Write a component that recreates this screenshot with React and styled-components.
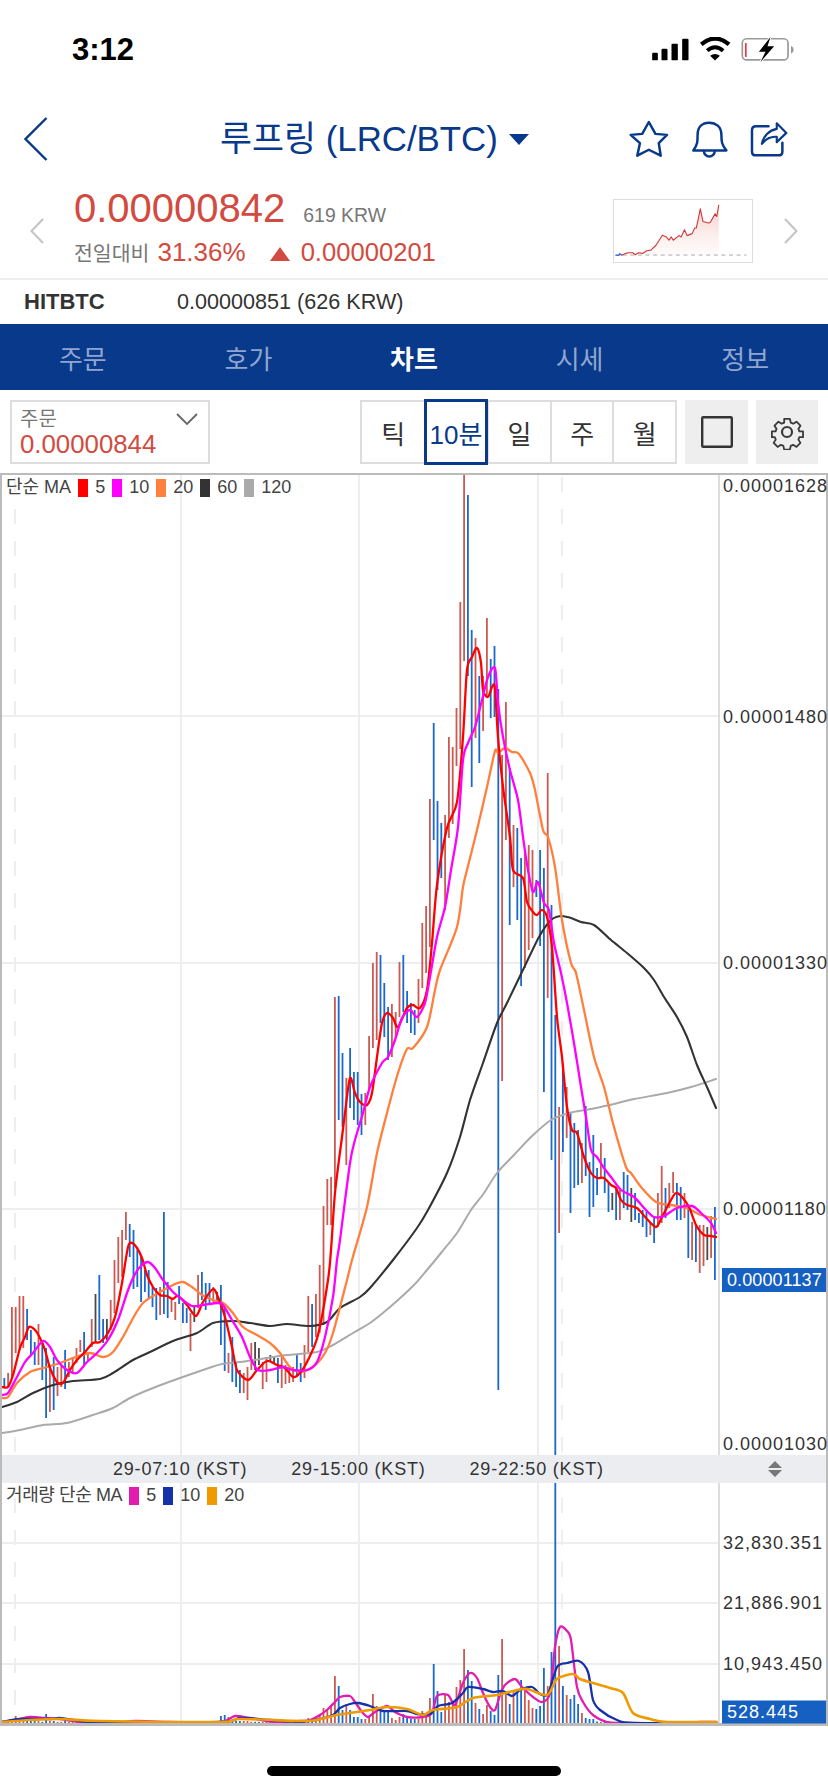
import React from 'react';
import styled, { createGlobalStyle } from 'styled-components';

const NAVY = '#08398a';
const RED = '#d24b40';
const FONT = '"Liberation Sans", "Noto Sans CJK KR", sans-serif';

const Global = createGlobalStyle`
  html, body { margin: 0; padding: 0; background: #fff; }
  body { font-family: ${FONT}; color: #333; }
  #root { width: 828px; }
`;

const Page = styled.div`
  width: 828px;
  height: 1792px;
  display: flex;
  flex-direction: column;
  overflow: hidden;
`;

/* status bar */
const StatusBar = styled.div`
  height: 98px;
  flex: none;
  padding: 0 34px 0 72px;
  box-sizing: border-box;
  display: flex;
  align-items: center;
  justify-content: space-between;
`;
const Clock = styled.span`
  padding-top: 2px;
  font-size: 31px;
  font-weight: 700;
  color: #000;
`;
const StatusIcons = styled.div`
  display: flex;
  align-items: center;
  gap: 10px;
`;

/* header */
const Header = styled.div`
  height: 82px;
  flex: none;
  box-sizing: border-box;
  padding: 0 40px 0 24px;
  display: flex;
  align-items: center;
`;
const Title = styled.div`
  margin-left: 172px;
  display: flex;
  align-items: center;
  gap: 11px;
  font-size: 34.8px;
  line-height: 44px;
  color: ${NAVY};
  white-space: nowrap;
`;
const Caret = styled.span`
  width: 0;
  height: 0;
  border-left: 10px solid transparent;
  border-right: 10px solid transparent;
  border-top: 11px solid ${NAVY};
`;
const HeaderIcons = styled.div`
  margin-left: auto;
  display: flex;
  align-items: center;
  gap: 22px;
`;

/* price */
const PriceSection = styled.div`
  height: 100px;
  flex: none;
  box-sizing: border-box;
  padding: 3px 30px 0 30px;
  display: flex;
  align-items: center;
  border-bottom: 2px solid #eee;
`;
const PriceCol = styled.div`
  align-self: flex-start;
  margin: 5px 0 0 30px;
  display: flex;
  flex-direction: column;
  gap: 9px;
`;
const PriceRow = styled.div`
  display: flex;
  align-items: baseline;
  white-space: nowrap;
`;
const BigPrice = styled.span`
  font-size: 40px;
  line-height: 40px;
  color: ${RED};
`;
const Krw = styled.span`
  margin-left: 18px;
  font-size: 19.4px;
  color: #777;
`;
const Muted = styled.span`
  font-size: 20.5px;
  line-height: 30px;
  color: #777;
`;
const RedText = styled.span`
  font-size: ${p => p.$size}px;
  line-height: 30px;
  color: ${RED};
  margin-left: ${p => p.$gap || 0}px;
`;
const Up = styled.span`
  width: 0;
  height: 0;
  margin-left: 24px;
  border-left: 10px solid transparent;
  border-right: 10px solid transparent;
  border-bottom: 14px solid ${RED};
`;
const Spark = styled.div`
  margin-left: auto;
  margin-right: 31px;
  width: 140px;
  height: 64px;
  box-sizing: border-box;
  border: 1.5px solid #ddd;
  svg { display: block; width: 137px; height: 61px; }
`;

/* exchange row */
const ExchangeRow = styled.div`
  height: 44px;
  flex: none;
  box-sizing: border-box;
  padding-left: 24px;
  display: flex;
  align-items: center;
  font-size: 21.6px;
  color: #333;
`;
const ExName = styled.b`
  width: 153px;
  font-size: 22px;
  color: #333;
`;

/* nav */
const Nav = styled.div`
  height: 66px;
  flex: none;
  background: ${NAVY};
  display: grid;
  grid-template-columns: repeat(5, 1fr);
`;
const NavItem = styled.div`
  display: flex;
  align-items: center;
  justify-content: center;
  font-size: 26px;
  color: ${p => (p.$active ? '#fff' : '#8ea6cf')};
  font-weight: ${p => (p.$active ? 700 : 400)};
`;

/* toolbar */
const Toolbar = styled.div`
  height: 83px;
  flex: none;
  box-sizing: border-box;
  padding: 10px 10px 9px;
  display: flex;
  align-items: stretch;
  gap: 8px;
`;
const OrderBox = styled.div`
  width: 200px;
  box-sizing: border-box;
  border: 2px solid #ddd;
  padding: 5px 0 0 8px;
  display: flex;
  flex-direction: column;
  position: relative;
`;
const OrderLabel = styled.span`
  font-size: 20px;
  line-height: 24px;
  color: #777;
`;
const OrderValue = styled.span`
  font-size: 25.8px;
  line-height: 27px;
  color: ${RED};
`;
const OrderChevron = styled.svg`
  position: absolute;
  right: 10px;
  top: 11px;
`;
const Tabs = styled.div`
  margin-left: auto;
  width: 317px;
  box-sizing: border-box;
  border: 2px solid #ddd;
  display: grid;
  grid-template-columns: repeat(5, 1fr);
`;
const Tab = styled.div`
  display: flex;
  align-items: center;
  justify-content: center;
  font-size: 26px;
  white-space: nowrap;
  color: ${p => (p.$active ? NAVY : '#333')};
  border-left: ${p => (p.$first ? 'none' : '2px solid #ddd')};
  ${p => p.$active && `outline: 3px solid ${NAVY}; outline-offset: -2px; position: relative; border-left: none; margin: -2px 0;`}
`;
const IconButton = styled.div`
  width: ${p => p.$w}px;
  background: #eee;
  display: flex;
  align-items: center;
  justify-content: center;
`;

/* chart */
const ChartFrame = styled.div`
  width: 828px;
  height: 1253px;
  flex: none;
  box-sizing: border-box;
  border: solid #bbb;
  border-width: 2px 2px 3px;
  display: flex;
  flex-direction: column;
`;
const Pane = styled.div`
  display: flex;
  height: ${p => p.$h}px;
  flex: none;
`;
const Plot = styled.div`
  position: relative;
  width: 716px;
  flex: none;
  svg { display: block; }
`;
const Legend = styled.div`
  position: absolute;
  left: 4px;
  top: ${p => p.$top}px;
  display: flex;
  align-items: center;
  gap: 7px;
  font-size: 18px;
  line-height: 19px;
  color: #444;
  white-space: nowrap;
`;
const LegendTitle = styled.span`
  letter-spacing: ${p => p.$ls || 0}px;
`;
const Swatch = styled.i`
  display: block;
  width: 10px;
  height: 18px;
  background: ${p => p.$c};
`;
const LegendItem = styled.span`
  display: flex;
  align-items: center;
  gap: 7px;
`;
const Axis = styled.div`
  position: relative;
  flex: 1;
  border-left: 2px solid #ddd;
`;
const Tick = styled.span`
  position: absolute;
  left: 3px;
  transform: translateY(-50%);
  font-size: 18px;
  line-height: 22px;
  letter-spacing: 1px;
  color: #333;
  white-space: nowrap;
`;
const CurrentTick = styled(Tick)`
  left: 2px;
  right: 0;
  box-sizing: border-box;
  height: ${p => p.$h}px;
  line-height: ${p => p.$h}px;
  padding-left: 5px;
  letter-spacing: ${p => p.$ls}px;
  background: #1560c0;
  color: #fff;
`;
const TimeBar = styled.div`
  height: 28px;
  flex: none;
  background: #ecedf1;
  box-sizing: border-box;
  padding: 0 44px 0 111px;
  display: flex;
  align-items: center;
  gap: 44px;
  font-size: 18px;
  letter-spacing: 0.8px;
  color: #333;
  white-space: nowrap;
`;
const SortIcon = styled.svg`
  margin-left: auto;
`;
const HomeBar = styled.div`
  width: 294px;
  height: 10px;
  flex: none;
  margin: 40px auto 0;
  border-radius: 5px;
  background: #000;
`;

/* data: colour, top, bottom in page pixels */
const candles = `b1378,1388 r1373,1387 r1307,1377 r1307,1353 r1296,1350 r1296,1348 b1309,1340 b1330,1355 b1342,1365 r1324,1365
b1340,1380 b1348,1418 r1365,1412 b1357,1410 r1367,1396 r1366,1387 b1350,1389 r1362,1377 r1357,1372 r1348,1363
r1340,1352 b1332,1365 r1352,1360 r1319,1347 d1294,1343 b1275,1340 b1319,1343 d1319,1340 r1300,1330 r1260,1313
r1237,1283 r1230,1277 r1212,1240 b1224,1257 b1230,1289 b1250,1287 b1255,1302 b1270,1292 b1270,1298 b1287,1307
b1288,1320 r1287,1315 b1212,1314 b1282,1318 r1298,1312 r1302,1320 b1286,1304 b1303,1323 b1308,1323 r1313,1351
d1307,1322 r1275,1308 b1272,1300 b1283,1310 b1283,1303 r1287,1302 d1292,1302 b1285,1345 b1308,1371 r1353,1373
b1337,1382 b1363,1387 b1370,1393 r1373,1393 r1367,1400 r1343,1370 d1342,1370 d1348,1365 r1362,1389 r1357,1382
d1355,1362 d1356,1364 b1358,1383 r1357,1388 r1365,1384 r1367,1383 r1367,1382 b1355,1377 b1363,1382 r1345,1378
r1296,1352 b1304,1347 r1294,1337 r1265,1333 r1206,1325 r1179,1225 r1177,1225 r997,1188 b996,1120 b1053,1127
r1078,1165 b1048,1108 b1072,1120 b1072,1125 b1094,1135 r1093,1125 r1036,1090 r963,1048 r952,1040 b955,1023
b983,1037 b1007,1060 r1004,1057 r1012,1038 r962,1017 b955,1012 b991,1023 b1003,1033 b1010,1035 r979,1023
r923,988 r906,973 r799,947 b723,840 b801,890 b823,878 r815,910 r737,838 r747,824 r708,766
r602,749 r474,661 b495,676 b630,787 r638,738 b676,763 r676,731 r618,697 b659,718 b646,717
b689,1390 r755,1081 r702,840 b768,925 r825,887 b828,920 b858,986 r850,968 r845,950 r850,938
b880,897 b850,946 b868,1092 r773,998 b905,1160 b1015,1455 r1107,1233 b1065,1152 r1087,1138 b1113,1213
b1123,1188 b1130,1185 r1143,1183 b1106,1176 b1162,1217 b1135,1207 b1168,1195 r1143,1178 b1158,1193 b1183,1212
d1193,1210 b1187,1220 r1190,1220 b1172,1208 b1175,1210 d1188,1222 b1193,1220 b1213,1223 b1210,1227 b1210,1237
r1222,1235 b1218,1243 r1193,1227 r1166,1223 b1188,1218 r1183,1208 r1172,1193 b1183,1220 b1187,1220 r1193,1218
b1205,1258 r1222,1260 b1225,1262 r1225,1273 r1225,1266 d1227,1260 r1216,1258 b1207,1280`
  .trim().split(/\s+/).map(s => {
    const [t, b] = s.slice(1).split(',').map(Number);
    return { c: s[0], t, b };
  });

const volLate = [5,4,3,9,15,14,16,47,37,13,19,13,6,6,4,4,7,29,17,14,13,11,5,3,6,9,5,4,4,4,12,9,25,59,32,11,29,21,19,36,43,74,53,42,20,14,9,18,12,8,48,84,31,19,33,31,43,33,23,15,14,17,55,37,71,240,77,37,28,24,28,19,10,5,4,4,1.5];
const volEarly = { 2: 4, 3: 7, 4: 5, 5: 2, 6: 3, 7: 2, 8: 2, 9: 2, 11: 9, 12: 2, 13: 2, 16: 3, 30: 3, 57: 7, 58: 8, 59: 6, 60: 3, 61: 2, 62: 2, 63: 2, 64: 2 };
const volume = i => (i >= 80 ? volLate[i - 80] ?? 1 : volEarly[i] ?? 1.2);
const candleX = i => 4.3 + 3.8 * i;
const COLORS = { b: '#1b69cd', r: '#cb5a52', d: '#4a4a4a' };

const pts = s => s.trim().split(/\s+/).map(p => p.split(',').map(Number));

const ma5 = pts(`2,1387 8,1387 13,1375 20,1348 25,1337 29,1327 35,1330 40,1338 45,1350 50,1368 57,1382 63,1383 70,1370 77,1360 85,1352 93,1343 100,1342 108,1333 115,1317 122,1283 128,1247 132,1243 137,1248 142,1258 147,1275 153,1287 160,1295 167,1296 173,1299 178,1296 187,1305 196,1316 203,1302 213,1289 218,1297 225,1317 232,1347 237,1370 248,1380 257,1370 267,1361 277,1365 285,1368 293,1377 300,1373 308,1360 318,1335 328,1280 331,1250 335,1193 342,1137 345,1113 350,1078 355,1093 360,1102 367,1105 372,1093 377,1057 382,1023 387,1013 393,1018 398,1027 407,1008 413,1005 420,1008 427,990 432,943 437,885 447,828 457,802 463,737 467,670 472,657 477,648 481,663 483,690 488,697 492,687 495,688 498,737 503,787 510,837 513,870 523,878 527,902 533,912 537,915 542,910 547,917 552,947 557,1017 562,1057 567,1107 572,1130 577,1133 584,1157 591,1173 597,1178 604,1178 611,1185 616,1188 621,1200 627,1205 637,1208 646,1218 656,1227 662,1217 671,1200 676,1193 682,1197 689,1207 696,1225 704,1235 711,1236 716,1237`);
const ma10 = pts(`2,1395 8,1393 17,1377 25,1362 33,1353 43,1341 50,1347 57,1360 67,1370 77,1373 87,1362 97,1353 108,1340 118,1320 127,1293 133,1278 140,1267 148,1262 155,1268 163,1280 173,1292 183,1300 192,1306 203,1305 217,1303 223,1305 232,1320 242,1337 250,1357 258,1370 270,1370 283,1367 293,1370 307,1370 317,1362 325,1337 333,1297 337,1260 340,1240 350,1163 355,1140 363,1113 370,1087 382,1063 388,1057 395,1040 402,1018 410,1010 417,1017 425,1003 430,977 437,937 445,907 451,870 458,827 463,760 468,743 475,727 482,700 488,677 495,668 498,703 503,737 510,770 518,800 523,837 528,870 533,892 538,882 544,903 549,910 554,943 561,973 567,1003 574,1043 581,1087 586,1117 591,1150 597,1157 604,1168 611,1177 621,1190 634,1197 646,1210 654,1217 664,1216 677,1208 692,1206 701,1213 711,1223 716,1233`);
const ma20 = pts(`2,1398 8,1397 17,1383 30,1372 43,1368 60,1363 73,1358 90,1353 103,1357 113,1352 123,1337 132,1320 143,1303 160,1292 173,1285 183,1282 192,1287 202,1295 213,1300 223,1303 233,1313 243,1327 257,1335 270,1343 280,1353 290,1367 300,1372 313,1367 325,1353 333,1333 347,1280 352,1260 367,1207 377,1153 387,1113 398,1073 407,1049 413,1048 427,1027 435,990 440,970 457,927 463,887 467,870 477,830 487,787 495,751 498,753 505,748 512,752 519,754 530,773 535,790 543,830 548,837 555,867 562,920 571,963 576,973 584,1010 594,1057 604,1087 614,1127 626,1167 631,1173 641,1187 656,1202 671,1205 687,1208 701,1215 716,1219`);
const ma60 = pts(`2,1407 17,1402 33,1393 53,1385 73,1381 100,1379 113,1373 133,1360 150,1352 173,1341 197,1333 213,1323 233,1321 250,1323 270,1326 287,1324 310,1326 327,1322 340,1308 360,1297 370,1288 393,1260 417,1228 428,1210 447,1173 460,1137 470,1100 483,1063 497,1023 507,1003 522,972 539,937 551,920 561,916 571,918 581,922 594,925 611,940 627,953 644,968 654,980 664,997 677,1017 687,1037 697,1065 707,1087 716,1108`);
const ma120 = pts(`2,1433 20,1430 43,1425 67,1423 93,1415 113,1408 130,1398 153,1388 180,1378 203,1370 222,1364 240,1362 267,1358 287,1355 317,1352 333,1345 353,1333 370,1323 390,1307 414,1285 427,1270 441,1253 457,1233 471,1210 484,1193 497,1173 514,1155 531,1137 551,1120 569,1113 591,1109 614,1104 634,1099 667,1093 691,1087 716,1079`);
const vPink = pts(`2,1722 15,1720 30,1717 45,1718 60,1719 80,1722 115,1723 135,1721 170,1722 220,1722 235,1716 250,1718 275,1722 300,1721 310,1720 320,1715 328,1709 335,1702 340,1697 350,1696 355,1702 362,1712 368,1717 375,1712 387,1706 395,1712 407,1717 423,1717 432,1713 437,1696 448,1695 455,1705 463,1683 470,1673 477,1678 483,1693 490,1707 495,1710 500,1695 505,1685 515,1679 522,1687 533,1697 542,1702 550,1693 555,1647 560,1627 567,1631 571,1640 577,1687 583,1702 593,1715 607,1722 620,1723 680,1723 700,1722 716,1722`);
const vBlue = pts(`2,1722 20,1719 50,1719 60,1718 80,1721 100,1722 220,1722 240,1718 270,1720 300,1722 320,1719 333,1715 340,1708 350,1704 358,1703 370,1706 383,1711 407,1711 417,1714 430,1714 438,1706 452,1703 463,1693 468,1687 483,1689 493,1692 503,1691 512,1696 520,1690 532,1687 540,1694 548,1694 557,1667 567,1663 579,1661 588,1672 593,1700 600,1710 617,1720 633,1723 716,1723`);
const vOrange = pts(`2,1722 30,1720 60,1719 100,1721 220,1722 240,1719 300,1721 317,1720 337,1715 357,1712 370,1710 387,1707 407,1709 423,1715 433,1710 457,1707 473,1698 497,1695 513,1691 527,1689 547,1695 557,1679 573,1674 580,1679 593,1683 610,1688 623,1693 633,1713 650,1719 667,1722 717,1722`);

const smooth = p => {
  let d = `M${p[0][0]} ${p[0][1]}`;
  for (let i = 0; i < p.length - 1; i++) {
    const a = p[i - 1] || p[i], b = p[i], c = p[i + 1], e = p[i + 2] || c;
    const k = 0.14;
    d += `C${(b[0] + (c[0] - a[0]) * k).toFixed(1)} ${(b[1] + (c[1] - a[1]) * k).toFixed(1)} ${(c[0] - (e[0] - b[0]) * k).toFixed(1)} ${(c[1] - (e[1] - b[1]) * k).toFixed(1)} ${c[0]} ${c[1]}`;
  }
  return d;
};

const clamp = (v, lo, hi) => Math.min(hi, Math.max(lo, v));
const priceTop = v => clamp(1209 + (1180 - v) * 1.64, 486, 1444) - 475;
const volTop = v => clamp(1724 - v * (181 / 32830.351), 0, 1711.5) - 1483;

const GRID = '#eeeeee';

function Grid({ top, bottom, rows, dashStart }) {
  return (
    <g stroke={GRID} strokeWidth="2" fill="none">
      {rows.map(y => <line key={y} x1="2" x2="718" y1={y} y2={y} />)}
      {[181, 359, 538].map(x => <line key={x} x1={x} x2={x} y1={top} y2={bottom} />)}
      {[15, 562].map(x => <line key={x} x1={x} x2={x} y1={dashStart} y2={bottom} strokeDasharray="15 17" />)}
    </g>
  );
}

function CandlePlot() {
  return (
    <svg width="716" height="980" viewBox="2 475 716 980">
      <Grid top={475} bottom={1455} rows={[716, 963, 1209]} dashStart={477} />
      {candles.map((c, i) => (
        <rect key={i} x={candleX(i) - 0.9} y={c.t} width="1.8" height={c.b - c.t} fill={COLORS[c.c]} />
      ))}
      <g fill="none" strokeLinejoin="round" strokeLinecap="round">
        <path d={smooth(ma120)} stroke="#aaaaaa" strokeWidth="2" />
        <path d={smooth(ma60)} stroke="#333333" strokeWidth="2.1" />
        <path d={smooth(ma20)} stroke="#ff7f3c" strokeWidth="2.3" />
        <path d={smooth(ma5)} stroke="#ff0000" strokeWidth="2.3" />
        <path d={smooth(ma10)} stroke="#ff00ff" strokeWidth="2.3" />
      </g>
    </svg>
  );
}

function VolumePlot() {
  return (
    <svg width="716" height="240" viewBox="2 1483 716 240">
      <Grid top={1483} bottom={1723} rows={[1543, 1603, 1664]} dashStart={1498} />
      {candles.map((c, i) => {
        const h = volume(i);
        return <rect key={i} x={candleX(i) - 0.9} y={1723 - h} width="1.8" height={h} fill={COLORS[c.c === 'd' ? 'b' : c.c]} />;
      })}
      <g fill="none" strokeLinejoin="round" strokeLinecap="round">
        <path d={smooth(vPink)} stroke="#e31cb0" strokeWidth="2.3" />
        <path d={smooth(vBlue)} stroke="#1532a8" strokeWidth="2.3" />
        <path d={smooth(vOrange)} stroke="#ef9a00" strokeWidth="2.6" />
      </g>
    </svg>
  );
}

const navIcon = { fill: 'none', stroke: NAVY, strokeWidth: 7.5, strokeLinejoin: 'round', strokeLinecap: 'round' };

const SparkPts = pts(`18,437 28,438 30,433 38,437 48,432 58,430 70,430 78,436 88,430 100,432 112,424 125,422 140,408 160,377 172,382 180,392 187,382 193,392 210,378 217,382 227,360 235,378 250,372 258,355 263,355 275,297 283,335 300,340 305,338 320,312 325,320 331,285`);
const sparkLine = SparkPts.map(p => p.join(' ')).join(' L');

export default function App() {
  return (
    <Page>
      <Global />
      <StatusBar>
        <Clock>3:12</Clock>
        <StatusIcons>
          <svg width="37" height="23" viewBox="40 38 110 69">
            <rect x="40" y="82" width="17" height="23" rx="3.5" fill="#000" />
            <rect x="68" y="70" width="18" height="35" rx="3.5" fill="#000" />
            <rect x="98" y="55" width="19" height="50" rx="3.5" fill="#000" />
            <rect x="130" y="40" width="19" height="65" rx="3.5" fill="#000" />
          </svg>
          <svg width="32" height="24" viewBox="178 38 98 72">
            <path d="M185 60Q227 24 270 60" fill="none" stroke="#000" strokeWidth="13" />
            <path d="M203 79Q227 58 252 79" fill="none" stroke="#000" strokeWidth="12" />
            <path d="M212 95Q227 84 242 95L227 109Z" fill="#000" />
          </svg>
          <svg width="53" height="25" viewBox="303 36 160 75">
            <rect x="307" y="41" width="138" height="64" rx="13" fill="none" stroke="#999" strokeWidth="5" />
            <rect x="315" y="54" width="5" height="42" fill="#f0323c" />
            <path d="M454 62Q462 66 462 74Q462 82 454 86Z" fill="#999" />
            <path d="M392 36L357 80H377L362 111L403 64H383Z" fill="#000" stroke="#fff" strokeWidth="5" paintOrder="stroke" />
          </svg>
        </StatusIcons>
      </StatusBar>

      <Header>
        <svg width="24" height="44" viewBox="0 0 24 44">
          <path d="M22.5 1L1.5 22L22.5 43" fill="none" stroke={NAVY} strokeWidth="2.4" />
        </svg>
        <Title>루프링 (LRC/BTC)<Caret /></Title>
        <HeaderIcons>
          <svg width="41" height="38" viewBox="55 30 122 115">
            <path d="M117 36L137 72L172 75L147 100L153 138L117 120L82 138L90 100L62 75L97 72Z" {...navIcon} />
          </svg>
          <svg width="37" height="38" viewBox="245 30 112 115">
            <path d="M252 122C265 105 265 95 265 75C265 50 280 38 300 38C320 38 337 50 337 75C337 95 338 105 352 122Z" {...navIcon} />
            <path d="M284 124A16.500 16.500 0 0 0 317 124" {...navIcon} />
          </svg>
          <svg width="38" height="37" viewBox="422 35 115 110">
            <path d="M478 50H440Q428 50 428 62V126Q428 138 440 138H508Q520 138 520 126V100" {...navIcon} />
            <path d="M458 103C462 80 480 62 503 58V41L532 70L503 98V82C485 80 470 88 458 103Z" {...navIcon} strokeWidth="6.5" />
          </svg>
        </HeaderIcons>
      </Header>

      <PriceSection>
        <svg width="14" height="26" viewBox="0 0 14 26">
          <path d="M13 1L1.500 13L13 25" fill="none" stroke="#c6c6c6" strokeWidth="2.2" />
        </svg>
        <PriceCol>
          <PriceRow>
            <BigPrice>0.00000842</BigPrice>
            <Krw>619 KRW</Krw>
          </PriceRow>
          <PriceRow>
            <Muted>전일대비</Muted>
            <RedText $size={26} $gap={8}>31.36%</RedText>
            <Up />
            <RedText $size={25.6} $gap={11}>0.00000201</RedText>
          </PriceRow>
        </PriceCol>
        <Spark>
          <svg viewBox="15 270 412 185">
            <defs>
              <linearGradient id="sparkFill" x1="0" x2="0" y1="0" y2="1">
                <stop offset="0" stopColor="#f3b9b2" stopOpacity="0.75" />
                <stop offset="1" stopColor="#fbe9e7" stopOpacity="0.2" />
              </linearGradient>
            </defs>
            <path d={`M${sparkLine} L331 437 L18 437 Z`} fill="url(#sparkFill)" />
            <path d="M40 437H415" stroke="#aaa" strokeWidth="3" strokeDasharray="12 11" fill="none" />
            <path d={`M${sparkLine}`} fill="none" stroke="#d0393a" strokeWidth="3.4" strokeLinejoin="round" />
            <path d="M18 438L28 438L30 434L38 437" fill="none" stroke="#3a78d8" strokeWidth="4" />
          </svg>
        </Spark>
        <svg width="14" height="26" viewBox="0 0 14 26">
          <path d="M1 1L12.500 13L1 25" fill="none" stroke="#c6c6c6" strokeWidth="2.2" />
        </svg>
      </PriceSection>

      <ExchangeRow>
        <ExName>HITBTC</ExName>
        <span>0.00000851 (626 KRW)</span>
      </ExchangeRow>

      <Nav>
        <NavItem>주문</NavItem>
        <NavItem>호가</NavItem>
        <NavItem $active>차트</NavItem>
        <NavItem>시세</NavItem>
        <NavItem>정보</NavItem>
      </Nav>

      <Toolbar>
        <OrderBox>
          <OrderLabel>주문</OrderLabel>
          <OrderValue>0.00000844</OrderValue>
          <OrderChevron width="22" height="12" viewBox="0 0 22 12">
            <path d="M1 1L11 11L21 1" fill="none" stroke="#666" strokeWidth="1.8" />
          </OrderChevron>
        </OrderBox>
        <Tabs>
          <Tab $first>틱</Tab>
          <Tab $active>10분</Tab>
          <Tab>일</Tab>
          <Tab>주</Tab>
          <Tab>월</Tab>
        </Tabs>
        <IconButton $w={63}>
          <svg width="32" height="32" viewBox="0 0 32 32">
            <rect x="1.200" y="1.200" width="29.600" height="29.600" rx="1" fill="none" stroke="#333" strokeWidth="2.400" />
          </svg>
        </IconButton>
        <IconButton $w={62}>
          <svg width="36" height="36" viewBox="0 0 36 36" fill="none" stroke="#3a3a3a" strokeWidth="2.200" strokeLinejoin="round">
            <path d="M14.500 2h7l1 4.500 3 1.300 4-2.500 4.800 4.900-2.500 4 1.200 3h4.500v7h-4.500l-1.200 3 2.500 4-4.800 4.900-4-2.500-3 1.300-1 4.500h-7l-1-4.500-3-1.300-4 2.500-4.800-4.900 2.500-4-1.200-3H-.5v-7H4l1.200-3-2.500-4 4.800-4.900 4 2.500 3-1.300z" transform="translate(3.300 3.300) scale(.82)" />
            <circle cx="18" cy="18" r="5" />
          </svg>
        </IconButton>
      </Toolbar>

      <ChartFrame>
        <Pane $h={980}>
          <Plot>
            <CandlePlot />
            <Legend $top={3}>
              <LegendTitle>단순 MA</LegendTitle>
              <LegendItem><Swatch $c="#ff0000" />5</LegendItem>
              <LegendItem><Swatch $c="#ff00ff" />10</LegendItem>
              <LegendItem><Swatch $c="#ff7f3c" />20</LegendItem>
              <LegendItem><Swatch $c="#333333" />60</LegendItem>
              <LegendItem><Swatch $c="#aaaaaa" />120</LegendItem>
            </Legend>
          </Plot>
          <Axis>
            {[[1628, '0.00001628'], [1480, '0.00001480'], [1330, '0.00001330'], [1180, '0.00001180'], [1030, '0.00001030']].map(([v, t]) => (
              <Tick key={t} style={{ top: priceTop(v) }}>{t}</Tick>
            ))}
            <CurrentTick $h={24} $ls={0.1} style={{ top: priceTop(1137) }}>0.00001137</CurrentTick>
          </Axis>
        </Pane>
        <TimeBar>
          <span>29-07:10 (KST)</span>
          <span>29-15:00 (KST)</span>
          <span>29-22:50 (KST)</span>
          <SortIcon width="14" height="16" viewBox="0 0 14 16">
            <path d="M7 0L14 7H0ZM7 16L0 9H14Z" fill="#777" />
          </SortIcon>
        </TimeBar>
        <Pane $h={240}>
          <Plot>
            <VolumePlot />
            <Legend $top={3}>
              <LegendTitle $ls={-0.4}>거래량 단순 MA</LegendTitle>
              <LegendItem><Swatch $c="#e31cb0" />5</LegendItem>
              <LegendItem><Swatch $c="#1532a8" />10</LegendItem>
              <LegendItem><Swatch $c="#ef9a00" />20</LegendItem>
            </Legend>
          </Plot>
          <Axis>
            {[[32830.351, '32,830.351'], [21886.901, '21,886.901'], [10943.45, '10,943.450']].map(([v, t]) => (
              <Tick key={t} style={{ top: volTop(v) }}>{t}</Tick>
            ))}
            <CurrentTick $h={23} $ls={1} style={{ top: volTop(528.445) }}>528.445</CurrentTick>
          </Axis>
        </Pane>
      </ChartFrame>
      <HomeBar />
    </Page>
  );
}
